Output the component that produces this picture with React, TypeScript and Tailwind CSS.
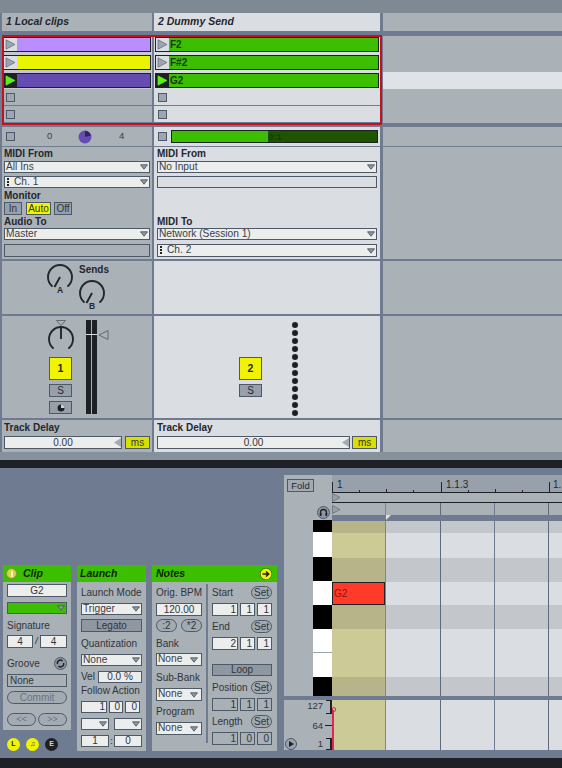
import React from 'react';

const Caret = () => (
  <svg width="8" height="6" viewBox="0 0 8 6" className="shrink-0">
    <path d="M0.5 0.8H7.5L4 5.2Z" fill="#8f98a2" stroke="#444c58" strokeWidth="0.8" />
  </svg>
);

const Select = ({ label, dots, className = '' }: { label?: string; dots?: boolean; className?: string }) => (
  <div className={`flex items-center justify-between pl-[1px] pr-[1px] bg-[#eceded] border border-[#4e5968] text-[10.2px] text-[#3a3f47] leading-none ${className}`}>
    <span className="flex items-center gap-[5px] whitespace-nowrap">
      {dots && <span className="flex flex-col gap-[1px] ml-[1px]"><i className="w-[2px] h-[2px] bg-[#222]" /><i className="w-[2px] h-[2px] bg-[#222]" /><i className="w-[2px] h-[2px] bg-[#222]" /></span>}
      {label}
    </span>
    <Caret />
  </div>
);

const Label = ({ children, className = '' }: { children: React.ReactNode; className?: string }) => (
  <div className={`flex items-center h-[12px] text-[10px] font-bold text-[#23272d] leading-none whitespace-nowrap ${className}`}>{children}</div>
);

const Name = ({ children, className = '' }: { children: React.ReactNode; className?: string }) => (
  <div className={`flex items-center h-[12px] text-[10px] text-[#30353c] leading-none whitespace-nowrap ${className}`}>{children}</div>
);

const Field = ({ children, className = '', dark = false }: { children?: React.ReactNode; className?: string; dark?: boolean }) => (
  <div className={`flex items-center border border-[#4e5968] text-[10px] text-[#30353c] leading-none ${dark ? 'bg-[#a9b0b6]' : 'bg-[#eceded]'} ${className}`}>{children}</div>
);

const Pill = ({ children, className = '' }: { children: React.ReactNode; className?: string }) => (
  <div className={`flex items-center justify-center rounded-full border border-[#4e5968] bg-[#a2aab2] text-[10px] text-[#30353c] leading-none ${className}`}>{children}</div>
);

const Knob = ({ tick = 'low' }: { tick?: 'low' | 'up' }) => (
  <svg width="28" height="28" viewBox="0 0 28 28" fill="none" stroke="#23272d" strokeWidth="1.9">
    <path d="M6 23A12 12 0 1 1 22 23" strokeLinecap="round" />
    {tick === 'low' ? <path d="M14 14L8.5 24" /> : <path d="M14 3V14" />}
  </svg>
);

const StopBox = () => <span className="block w-[9px] h-[9px] bg-[#9ea7b1] border border-[#4e5968]" />;

const PlayBtn = ({ on }: { on?: boolean }) => (
  <div className={`w-[13px] h-full flex items-center justify-center shrink-0 ${on ? 'bg-[#1d2024]' : 'bg-[#dadde2]'}`}>
    <svg width="11" height="11" viewBox="0 0 11 11">
      <path d="M1 0.8L10 5.5L1 10.2Z" fill={on ? '#5cf01a' : '#9ca5af'} stroke={on ? '#5cf01a' : '#5f6874'} strokeWidth="0.7" />
    </svg>
  </div>
);

const Clip = ({ color, name, on }: { color: string; name?: string; on?: boolean }) => (
  <div className="pt-[1px] px-[1px]">
    <div className="flex h-[15px] items-center border border-[#1d2024]" style={{ backgroundColor: color }}>
      <PlayBtn on={on} />
      {name && <span className="pl-[1px] text-[10px] font-bold text-[#173a06]">{name}</span>}
    </div>
  </div>
);

const Row = ({ h, a, b, c, aCls = 'bg-[#aab1b7]', bCls = 'bg-[#dadde2]', cCls = 'bg-[#aab1b7]' }: { h: string; a?: React.ReactNode; b?: React.ReactNode; c?: React.ReactNode; aCls?: string; bCls?: string; cCls?: string }) => (
  <div className={`flex gap-[2px] pl-[2px] ${h}`}>
    <div className={`w-[150px] shrink-0 ${aCls}`}>{a}</div>
    <div className={`w-[226px] shrink-0 ${bCls}`}>{b}</div>
    <div className={`flex-1 ml-[1px] ${cCls}`}>{c}</div>
  </div>
);

const slots = [
  { a: '#b98fff', name: 'F2', h: 'h-[18px]' },
  { a: '#e9f500', name: 'F#2', h: 'h-[18px]' },
  { a: '#654cb0', name: 'G2', h: 'h-[17px]', on: true },
];

const Session = () => (
  <div className="bg-[#6e7b90]">
    <div className="h-[13px] bg-[#7f8994]" />
    <Row
      h="h-[18px]"
      a={<div className="h-full flex items-center pl-[4px] text-[10.5px] font-bold italic text-[#23272d]">1 Local clips</div>}
      b={<div className="h-full flex items-center pl-[4px] text-[10.5px] font-bold italic text-[#23272d]">2 Dummy Send</div>}
    />
    <div className="relative mt-[4px]">
      <div className="flex flex-col pt-[1px] pb-[2px]">
        {slots.map((s) => (
          <Row key={s.name} h={s.h} aCls="bg-[#c5c9ce]" bCls="bg-[#dadde2]" cCls={s.on ? 'bg-[#dfe2e6]' : 'bg-[#aab1b7]'}
            a={<Clip color={s.a} on={s.on} />}
            b={<Clip color="#3cbf00" name={s.name} on={s.on} />}
          />
        ))}
        {[0, 1].map((i) => (
          <Row key={i} h="h-[17px]"
            aCls="bg-[#aab1b7] border-b border-[#6e7b90]"
            bCls="bg-[#dadde2] border-b border-[#6e7b90]"
            a={<div className="h-full flex items-center pl-[4px]"><StopBox /></div>}
            b={<div className="h-full flex items-center pl-[4px]"><StopBox /></div>}
          />
        ))}
      </div>
      {/* red session box */}
      <div className="absolute left-[2px] top-0 bottom-0 w-[380px] border-[2px] border-[#c4111d]" />
    </div>
    <div className="h-[2px]" />
    <Row
      h="h-[19px]"
      a={
        <div className="h-full flex items-center pl-[4px] text-[9.5px] text-[#3a3f47]">
          <StopBox />
          <span className="ml-[32px] w-[10px]">0</span>
          <svg width="14" height="14" viewBox="0 0 14 14" className="ml-[21px]">
            <circle cx="7" cy="7" r="6.5" fill="#654cb0" />
            <path d="M7 7V1A6 6 0 0 1 12.8 5.5Z" fill="#2e2366" />
          </svg>
          <span className="ml-[27px]">4</span>
        </div>
      }
      b={
        <div className="h-full flex items-center pl-[4px]">
          <StopBox />
          <div className="ml-[4px] w-[207px] h-[13px] flex border border-[#1d2024] bg-[#1f5500]">
            <div className="w-[96px] bg-[#3cbf00]" />
            <span className="text-[9.5px] font-bold text-[#143a04] leading-[12px]">0:1</span>
          </div>
        </div>
      }
    />
    <div className="h-[1px]" />
    <Row
      h="h-[112px]"
      a={
        <div className="px-[2px] pt-[1px] flex flex-col">
          <Label>MIDI From</Label>
          <Select label="All Ins" className="h-[12px] mt-[1px]" />
          <Select label="Ch. 1" dots className="h-[12px] mt-[3px]" />
          <Label className="mt-[2px]">Monitor</Label>
          <div className="flex h-[13px] text-[10px] leading-none text-[#30353c]">
            <div className="w-[18px] flex items-center justify-center bg-[#97a0aa] border border-[#4e5968]">In</div>
            <div className="ml-[4px] w-[25px] flex items-center justify-center bg-[#f1f400] border border-[#4e5968]">Auto</div>
            <div className="ml-[3px] w-[18px] flex items-center justify-center bg-[#97a0aa] border border-[#4e5968]">Off</div>
          </div>
          <Label className="mt-[1px]">Audio To</Label>
          <Select label="Master" className="h-[12px]" />
          <Field dark className="h-[13px] mt-[4px]" />
        </div>
      }
      b={
        <div className="px-[3px] pt-[1px] flex flex-col">
          <Label>MIDI From</Label>
          <Select label="No Input" className="h-[12px] mt-[1px]" />
          <Field className="h-[12px] mt-[3px] !bg-[#dadde2]" />
          <div className="h-[28px]" />
          <Label>MIDI To</Label>
          <Select label="Network (Session 1)" className="h-[12px]" />
          <Select label="Ch. 2" dots className="h-[13px] mt-[4px]" />
        </div>
      }
    />
    <div className="h-[2px]" />
    <Row
      h="h-[53px]"
      a={
        <div className="flex pl-[44px] pt-[2px]">
          <div className="relative h-[28px]">
            <Knob />
            <span className="absolute left-[11px] top-[21px] text-[8.5px] font-bold text-[#23272d]">A</span>
          </div>
          <div className="ml-[5px] flex flex-col">
            <Label className="mt-[1px] mb-[3px]">Sends</Label>
            <div className="relative -ml-[1px] h-[28px]">
              <Knob />
              <span className="absolute left-[11px] top-[21px] text-[8.5px] font-bold text-[#23272d]">B</span>
            </div>
          </div>
        </div>
      }
    />
    <div className="h-[2px]" />
    <Row
      h="h-[102px]"
      a={
        <div className="flex h-full">
          <div className="ml-[46px] w-[25px] flex flex-col items-center">
            <svg width="10" height="6" viewBox="0 0 10 6" className="mt-[4px]">
              <path d="M0.5 0.5H9.5L5 5.5Z" fill="#aab1b7" stroke="#4e5968" strokeWidth="0.8" />
            </svg>
            <div className="-mt-[1px] h-[28px]"><Knob tick="up" /></div>
            <div className="mt-[4px] w-[23px] h-[23px] bg-[#f1f400] border border-[#4e5968] flex items-center justify-center text-[10.5px] font-bold text-[#23272d]">1</div>
            <div className="mt-[4px] w-[23px] h-[13px] bg-[#97a0aa] border border-[#4e5968] flex items-center justify-center text-[10px] text-[#23272d]">S</div>
            <div className="mt-[4px] w-[23px] h-[13px] bg-[#97a0aa] border border-[#4e5968] flex items-center justify-center">
              <svg width="8" height="8" viewBox="0 0 8 8"><circle cx="4" cy="4" r="3.5" fill="#1d2024" /><path d="M4 4H7.5A3.5 3.5 0 0 0 4 .5Z" fill="#cfd3d8" /></svg>
            </div>
          </div>
          <div className="relative ml-[13px] mt-[4px] flex gap-[1px] h-[94px]">
            <div className="w-[5px] bg-[#1d2024]" />
            <div className="w-[5px] bg-[#1d2024]" />
            <div className="absolute left-0 top-[14px] w-[11px] h-[1px] bg-[#dadde2]" />
            <svg width="11" height="10" viewBox="0 0 11 10" className="absolute left-[12px] top-[10px]">
              <path d="M10 .5V9.5L1 5Z" fill="#aab1b7" stroke="#4e5968" strokeWidth="0.8" />
            </svg>
          </div>
        </div>
      }
      b={
        <div className="flex h-full">
          <div className="ml-[85px] w-[23px] flex flex-col items-center pt-[41px]">
            <div className="w-[23px] h-[23px] bg-[#f1f400] border border-[#4e5968] flex items-center justify-center text-[10.5px] font-bold text-[#23272d]">2</div>
            <div className="mt-[4px] w-[23px] h-[13px] bg-[#97a0aa] border border-[#4e5968] flex items-center justify-center text-[10px] text-[#23272d]">S</div>
          </div>
          <div className="ml-[30px] pt-[6px] flex flex-col gap-[2px]">
            {Array.from({ length: 12 }).map((_, i) => (
              <span key={i} className="block w-[6px] h-[6px] rounded-full bg-[#1d2024]" />
            ))}
          </div>
        </div>
      }
    />
    <div className="h-[2px]" />
    <Row
      h="h-[32px]"
      a={
        <div className="px-[2px] pt-[2px] flex flex-col">
          <Label>Track Delay</Label>
          <div className="flex gap-[3px] mt-[2px]">
            <Field className="w-[118px] h-[13px] justify-center relative">
              0.00
              <svg width="7" height="9" viewBox="0 0 7 9" className="absolute right-[0px] top-[1px]"><path d="M7 0V9L0 4.500Z" fill="#a2aab2" /></svg>
            </Field>
            <div className="w-[25px] h-[13px] bg-[#d9e000] border border-[#4e5968] flex items-center justify-center text-[10px] leading-none text-[#30353c]">ms</div>
          </div>
        </div>
      }
      b={
        <div className="px-[3px] pt-[2px] flex flex-col">
          <Label>Track Delay</Label>
          <div className="flex gap-[2px] mt-[2px]">
            <Field className="w-[194px] h-[13px] justify-center relative">
              0.00
              <svg width="7" height="9" viewBox="0 0 7 9" className="absolute right-[0px] top-[1px]"><path d="M7 0V9L0 4.500Z" fill="#a2aab2" /></svg>
            </Field>
            <div className="w-[25px] h-[13px] bg-[#d9e000] border border-[#4e5968] flex items-center justify-center text-[10px] leading-none text-[#30353c]">ms</div>
          </div>
        </div>
      }
    />
    <div className="h-[8px] bg-[#87919b]" />
    <div className="h-[8px] bg-[#1d2024]" />
  </div>
);

const PanelHead = ({ children, icon }: { children: React.ReactNode; icon?: React.ReactNode }) => (
  <div className="h-[17px] bg-[#3cbf00] flex items-center gap-[6px] px-[3px] text-[10.5px] font-bold italic text-[#10240a] justify-start">
    {icon}
    {children}
  </div>
);

const RoundIcon = ({ bg, color, children }: { bg: string; color: string; children: React.ReactNode }) => (
  <div className={`w-[13px] h-[13px] rounded-full flex items-center justify-center text-[7px] font-bold ${bg} ${color}`}>{children}</div>
);

const ClipPanel = () => (
  <div className="w-[68px]">
    <div className="bg-[#a9b0b6] h-[165px]">
      <PanelHead icon={<span className="w-[11px] h-[11px] rounded-full bg-[#d6d24c] border border-[#8a8a40] flex items-center justify-center"><span className="w-[2px] h-[6px] bg-[#f3f3c0]" /></span>}>Clip</PanelHead>
      <div className="px-[4px] pt-[2px] flex flex-col">
        <Field className="h-[13px] justify-center">G2</Field>
        <div className="h-[12px] mt-[5px] bg-[#3cbf00] border border-[#4e5968] flex items-center justify-end pr-[1px]"><Caret /></div>
        <Name className="mt-[6px]">Signature</Name>
        <div className="flex items-center h-[13px] mt-[3px]">
          <Field className="w-[26px] h-[13px] justify-center">4</Field>
          <span className="w-[7px] text-center text-[9px] italic text-[#23272d]">/</span>
          <Field className="w-[27px] h-[13px] justify-center">4</Field>
        </div>
        <div className="mt-[9px] h-[13px] flex items-center justify-between">
          <Name>Groove</Name>
          <svg width="13" height="13" viewBox="0 0 13 13"><circle cx="6.5" cy="6.5" r="6" fill="#8f98a2" stroke="#4e5968" /><path d="M3.5 7A3 3 0 0 1 8.5 4M9.5 6A3 3 0 0 1 4.500 9" fill="none" stroke="#1d2024" strokeWidth="1.4" /></svg>
        </div>
        <Field dark className="h-[13px] mt-[4px] pl-[2px]">None</Field>
        <Pill className="h-[13px] mt-[4px] !text-[#6b7480]">Commit</Pill>
        <div className="flex justify-between mt-[9px]">
          <Pill className="w-[29px] h-[13px] !text-[#6b7480] !text-[9px]">{'<<'}</Pill>
          <Pill className="w-[29px] h-[13px] !text-[#6b7480] !text-[9px]">{'>>'}</Pill>
        </div>
      </div>
    </div>
    <div className="flex gap-[6px] pl-[4px] pt-[8px]">
      <RoundIcon bg="bg-[#f1f400]" color="text-[#23272d]">L</RoundIcon>
      <RoundIcon bg="bg-[#f1f400]" color="text-[#23272d]">♫</RoundIcon>
      <RoundIcon bg="bg-[#1d2024]" color="text-[#cfd3d8]">E</RoundIcon>
    </div>
  </div>
);

const LaunchPanel = () => (
  <div className="w-[69px] h-[186px] bg-[#a9b0b6]">
    <PanelHead>Launch</PanelHead>
    <div className="px-[4px] pt-[5px] flex flex-col">
      <Name>Launch Mode</Name>
      <Select label="Trigger" className="h-[12px] mt-[4px]" />
      <Field className="h-[13px] mt-[4px] justify-center !bg-[#8f98a2]">Legato</Field>
      <Name className="mt-[6px]">Quantization</Name>
      <Select label="None" className="h-[12px] mt-[4px]" />
      <div className="flex items-center justify-between mt-[5px] h-[12px]">
        <Name>Vel</Name>
        <Field className="w-[44px] h-[12px] justify-center">0.0 %</Field>
      </div>
      <Name className="mt-[2px]">Follow Action</Name>
      <div className="flex gap-[2px] mt-[4px]">
        <Field className="w-[26px] h-[12px] justify-end pr-[1px]">1</Field>
        <Field className="w-[14px] h-[12px] justify-end pr-[2px]">0</Field>
        <Field className="w-[15px] h-[12px] justify-end pr-[2px]">0</Field>
      </div>
      <div className="flex justify-between mt-[5px]">
        <Select className="w-[28px] h-[12px]" />
        <Select className="w-[28px] h-[12px]" />
      </div>
      <div className="flex items-center justify-between mt-[5px]">
        <Field className="w-[28px] h-[12px] justify-center">1</Field>
        <span className="text-[9px] leading-none text-[#23272d]">:</span>
        <Field className="w-[28px] h-[12px] justify-center">0</Field>
      </div>
    </div>
  </div>
);

const Triple = ({ v, dark }: { v: string[]; dark?: boolean }) => (
  <div className="flex gap-[2px]">
    <Field dark={dark} className="w-[26px] h-[13px] justify-end pr-[1px]">{v[0]}</Field>
    <Field dark={dark} className="w-[15px] h-[13px] justify-end pr-[2px]">{v[1]}</Field>
    <Field dark={dark} className="w-[15px] h-[13px] justify-end pr-[2px]">{v[2]}</Field>
  </div>
);

const SetRow = ({ label, className = '' }: { label: string; className?: string }) => (
  <div className={`flex items-center justify-between h-[13px] ${className}`}>
    <Name>{label}</Name>
    <Pill className="w-[21px] h-[13px]">Set</Pill>
  </div>
);

const NotesPanel = () => (
  <div className="w-[125px] h-[186px] bg-[#a9b0b6]">
    <div className="h-[17px] bg-[#3cbf00] flex items-center justify-between px-[4px] pr-[5px] text-[10.5px] font-bold italic text-[#10240a]">
      Notes
      <svg width="12" height="12" viewBox="0 0 12 12"><circle cx="6" cy="6" r="5.8" fill="#f1f400" stroke="#33373d" strokeWidth="0.6" /><path d="M2.500 6H8M6 3.500L8.700 6L6 8.500" fill="none" stroke="#1d2024" strokeWidth="1.500" /></svg>
    </div>
    <div className="flex h-[165px] pl-[4px] pt-[2px] pb-[4px]">
      <div className="w-[46px] pt-[3px] flex flex-col">
        <Name>Orig. BPM</Name>
        <Field className="h-[13px] mt-[4px] justify-center">120.00</Field>
        <div className="flex justify-between mt-[3px]">
          <Pill className="w-[21px] h-[13px]">:2</Pill>
          <Pill className="w-[21px] h-[13px]">*2</Pill>
        </div>
        <Name className="mt-[6px]">Bank</Name>
        <Select label="None" className="h-[13px] mt-[3px] pr-[3px]" />
        <Name className="mt-[6px]">Sub-Bank</Name>
        <Select label="None" className="h-[13px] mt-[4px] pr-[3px]" />
        <Name className="mt-[5px]">Program</Name>
        <Select label="None" className="h-[13px] mt-[4px] pr-[3px]" />
      </div>
      <div className="ml-[4px] w-[2px] bg-[#6e7b90]" />
      <div className="ml-[4px] w-[60px] pt-[2px] flex flex-col">
        <SetRow label="Start" />
        <div className="mt-[4px]"><Triple v={['1', '1', '1']} /></div>
        <SetRow label="End" className="mt-[4px]" />
        <div className="mt-[4px]"><Triple v={['2', '1', '1']} /></div>
        <div className="mt-[9px] h-[2px] bg-[#6e7b90]" />
        <Field className="mt-[5px] h-[13px] justify-center !bg-[#8f98a2]">Loop</Field>
        <SetRow label="Position" className="mt-[5px]" />
        <div className="mt-[4px]"><Triple dark v={['1', '1', '1']} /></div>
        <SetRow label="Length" className="mt-[4px]" />
        <div className="mt-[4px]"><Triple dark v={['1', '0', '0']} /></div>
      </div>
    </div>
  </div>
);

const keyRows = [
  { h: 'h-[12px]', black: true },
  { h: 'h-[25px]' },
  { h: 'h-[24px]', black: true },
  { h: 'h-[24px]', note: true },
  { h: 'h-[24px]', black: true },
  { h: 'h-[24px]' },
  { h: 'h-[24px]' },
  { h: 'h-[19px]', black: true },
];

const Cells = ({ yellow, grey }: { yellow: string; grey: string }) => (
  <>
    <div className={`w-[54px] shrink-0 border-r border-[#7d8792] ${yellow}`} />
    <div className={`w-[55px] shrink-0 border-r border-[#5f6a7c] ${grey}`} />
    <div className={`w-[54px] shrink-0 border-r border-[#6e7b90] ${grey}`} />
    <div className={`w-[54px] shrink-0 border-r border-[#5f6a7c] ${grey}`} />
    <div className={`flex-1 ${grey}`} />
  </>
);

const RollRow = ({ h, black, note }: { h: string; black?: boolean; note?: boolean }) => (
  <div className={`relative flex ${h}`}>
    <Cells yellow={black ? 'bg-[#b7b48a]' : 'bg-[#cccb98]'} grey={black ? 'bg-[#c3c7cb]' : 'bg-[#dadde2]'} />
    {note && (
      <div className="absolute left-0 top-0 w-[53px] h-[23px] bg-[#ff3a28] border border-[#1d2024] flex items-center pl-[1px] text-[10px] text-[#8a1210]">G2</div>
    )}
  </div>
);

const Editor = () => (
  <div className="flex-1 flex flex-col h-[275px] overflow-hidden">
    <div className="flex h-[221px]">
      {/* left column with fold and keys */}
      <div className="w-[48px] shrink-0 bg-[#aab1b7] flex flex-col">
        <div className="h-[46px] flex flex-col">
          <div className="ml-[3px] mt-[4px] w-[27px] h-[13px] bg-[#a2aab2] border border-[#4e5968] flex items-center justify-center text-[9.5px] leading-none text-[#23272d]">Fold</div>
          <div className="flex justify-end pr-[2px] mt-[14px]">
            <svg width="13" height="13" viewBox="0 0 13 13"><circle cx="6.5" cy="6.500" r="6" fill="#8f98a2" stroke="#4e5968" /><path d="M3.500 8V6.500A3 3 0 0 1 9.500 6.500V8" fill="none" stroke="#1d2024" strokeWidth="1.300" /><rect x="2.800" y="7" width="1.800" height="3" fill="#1d2024" /><rect x="8.400" y="7" width="1.800" height="3" fill="#1d2024" /></svg>
          </div>
        </div>
        <div className="flex justify-end">
          <div className="w-[19px] flex flex-col">
            {keyRows.map((k, i) => (
              <div key={i} className={`${k.h} ${k.black ? 'bg-black' : 'bg-white'} ${i === 5 ? 'border-b border-[#9aa2ab]' : ''}`} />
            ))}
          </div>
        </div>
      </div>
      <div className="flex-1 flex flex-col min-w-0">
        {/* ruler */}
        <div className="relative h-[18px] bg-[#98a1ab] border-b border-[#1d2024] text-[10px] text-[#23272d] leading-none">
          <span className="absolute left-[5px] top-[5px]">1</span>
          <span className="absolute left-[114px] top-[5px]">1.1.3</span>
          <span className="absolute left-[221px] top-[5px]">1.</span>
          <i className="absolute left-0 top-[7px] w-[1px] h-[10px] bg-[#23272d]" />
          <i className="absolute left-[109px] top-[7px] w-[1px] h-[10px] bg-[#23272d]" />
          <i className="absolute left-[217px] top-[7px] w-[1px] h-[10px] bg-[#23272d]" />
          <i className="absolute left-[27px] top-[15px] w-[1px] h-[2px] bg-[#23272d]" />
          <i className="absolute left-[54px] top-[14px] w-[1px] h-[3px] bg-[#23272d]" />
          <i className="absolute left-[81px] top-[15px] w-[1px] h-[2px] bg-[#23272d]" />
          <i className="absolute left-[163px] top-[14px] w-[1px] h-[3px] bg-[#23272d]" />
          <i className="absolute left-[190px] top-[15px] w-[1px] h-[2px] bg-[#23272d]" />
          <i className="absolute left-[136px] top-[15px] w-[1px] h-[2px] bg-[#23272d]" />
        </div>
        <div className="h-[10px] bg-[#aab1b7] border-b border-[#1d2024] flex items-center">
          <svg width="9" height="9" viewBox="0 0 9 9"><path d="M.5 .5L8 4.500L.5 8.500Z" fill="#98a1ab" stroke="#5f6874" strokeWidth="0.7" /></svg>
        </div>
        <div className="h-[12px] flex relative bg-[#aab1b7]">
          <div className="w-[54px] shrink-0 border-r border-[#7d8792]" />
          <div className="w-[55px] shrink-0 border-r border-[#5f6a7c]" />
          <div className="w-[54px] shrink-0 border-r border-[#6e7b90]" />
          <div className="w-[54px] shrink-0 border-r border-[#5f6a7c]" />
          <svg width="9" height="9" viewBox="0 0 9 9" className="absolute left-0 top-[2px]"><path d="M.5 .5L8 4.500L.5 8.500Z" fill="#98a1ab" stroke="#5f6874" strokeWidth="0.7" /></svg>
        </div>
        <div className="relative h-[6px] bg-[#6e7b90]">
          <svg width="5" height="5" viewBox="0 0 5 5" className="absolute left-[54px] top-0"><path d="M0 0H5L0 5Z" fill="#e6e6c8" /></svg>
        </div>
        {keyRows.map((k, i) => (
          <RollRow key={i} h={k.h} black={k.black} note={k.note} />
        ))}
      </div>
    </div>
    <div className="h-[4px] bg-[#6e7b90]" />
    {/* velocity lane */}
    <div className="flex h-[50px]">
      <div className="relative w-[48px] shrink-0 bg-[#aab1b7] text-[9.5px] text-[#30353c] leading-none">
        <span className="absolute right-[9px] top-[1px]">127</span>
        <span className="absolute right-[9px] top-[21px]">64</span>
        <span className="absolute right-[9px] top-[39px]">1</span>
        <i className="absolute right-0 top-0 w-[2px] h-[13px] bg-[#1d2024]" />
        <i className="absolute right-0 top-[38px] w-[2px] h-[12px] bg-[#1d2024]" />
        <i className="absolute right-0 top-0 w-[6px] h-[1px] bg-[#1d2024]" />
        <i className="absolute right-0 top-[13px] w-[6px] h-[1px] bg-[#1d2024]" />
        <i className="absolute right-0 top-[25px] w-[7px] h-[1px] bg-[#1d2024]" />
        <i className="absolute right-0 top-[38px] w-[6px] h-[1px] bg-[#1d2024]" />
        <i className="absolute right-0 top-[49px] w-[6px] h-[1px] bg-[#1d2024]" />
        <svg width="12" height="12" viewBox="0 0 12 12" className="absolute left-[1px] top-[38px]"><circle cx="6" cy="6" r="5.500" fill="#9aa2ab" stroke="#4e5968" /><path d="M4 3L9 6L4 9Z" fill="#1d2024" /></svg>
      </div>
      <div className="relative flex-1 flex">
        <Cells yellow="bg-[#cccb98]" grey="bg-[#dadde2]" />
        <i className="absolute left-0 top-[10px] w-[2px] h-[40px] bg-[#e0245e]" />
        <i className="absolute left-0 top-[7px] w-[4px] h-[5px] border border-[#e0245e] rounded-full" />
      </div>
    </div>
  </div>
);

export default function App() {
  return (
    <div className="w-[562px] h-[768px] overflow-hidden bg-[#6e7b90] font-['Liberation_Sans',sans-serif] flex flex-col">
      <Session />
      <div className="flex h-[290px] shrink-0 bg-[#6e7b90]">
        <div className="flex gap-[6px] pl-[3px] pt-[97px]">
          <ClipPanel />
          <LaunchPanel />
          <NotesPanel />
        </div>
        <div className="ml-[7px] pt-[7px] flex-1 min-w-0">
          <Editor />
        </div>
      </div>
      <div className="flex-1 bg-[#1d2024]" />
    </div>
  );
}
